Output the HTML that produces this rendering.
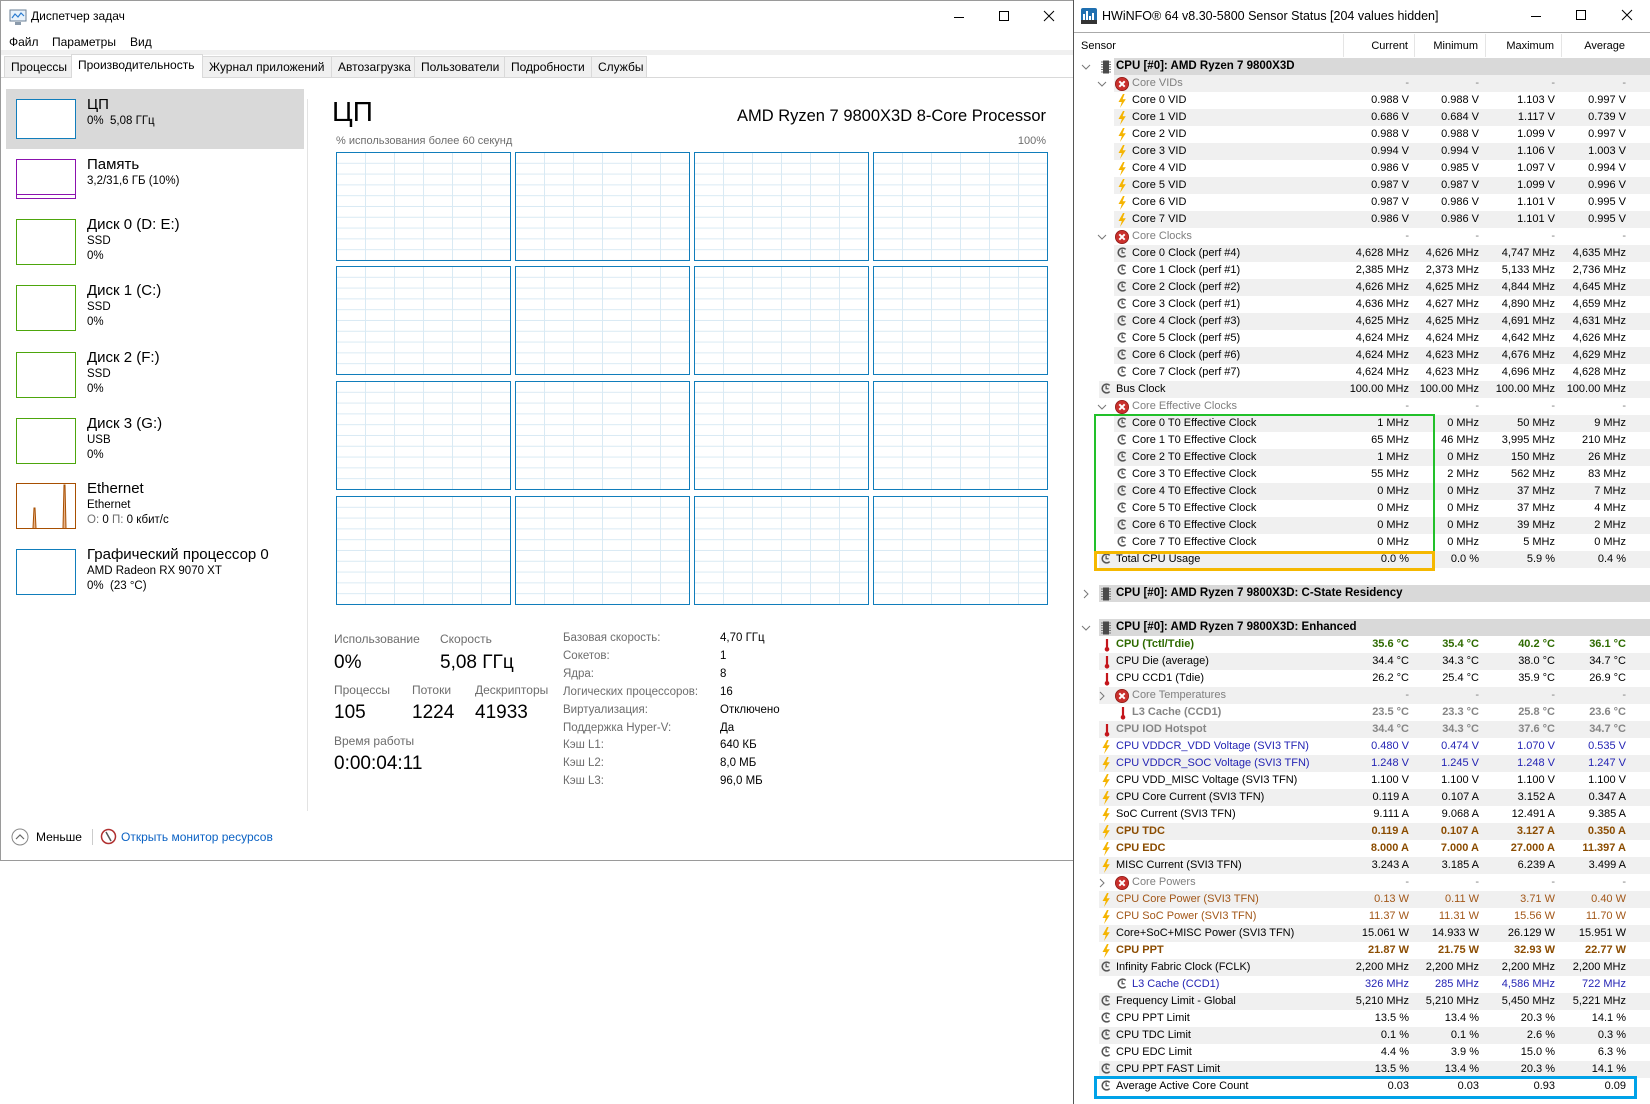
<!DOCTYPE html>
<html><head><meta charset="utf-8">
<style>
*{margin:0;padding:0;box-sizing:border-box}
body{width:1650px;height:1104px;background:#fff;position:relative;overflow:hidden;font-family:"Liberation Sans","DejaVu Sans",sans-serif;color:#000}
.a{position:absolute;white-space:nowrap}
#tm{position:absolute;left:0;top:0;width:1074px;height:861px;border:1px solid #9a9a9a;background:#fff}
.tab{position:absolute;top:55px;height:21px;border:1px solid #d9d9d9;border-bottom:none;background:#f0f0f0;font-size:12px;line-height:20px;padding-left:6px}
.tab.on{top:53px;height:24px;background:#fff;z-index:2}
.thumb{position:absolute;left:15px;width:60px;border:1px solid}
.it1{position:absolute;left:86px;font-size:15px;white-space:nowrap}
.it2{position:absolute;left:86px;font-size:11.5px;white-space:nowrap}
.gph{position:absolute;width:175px;height:109px;border:1px solid #117dbb;background-color:#fff;
background-image:linear-gradient(#d9eaf4 1px,transparent 1px),linear-gradient(90deg,#d9eaf4 1px,transparent 1px);
background-size:100% 10.8px,29px 100%;background-position:0 -1px,-1px 0}
.lb{position:absolute;font-size:12px;color:#6d6d6d;white-space:nowrap}
.vl{position:absolute;font-size:19px;white-space:nowrap}
.il{position:absolute;left:562px;font-size:11.5px;color:#6d6d6d;white-space:nowrap}
.iv{position:absolute;left:719px;font-size:11.5px;white-space:nowrap}
#hw{position:absolute;left:1073px;top:0;width:577px;height:1104px;border-left:1px solid #555;background:#fff}
.r{position:absolute;left:0;width:577px;height:17px;font-size:11px;line-height:17px}
.r.g::before,.r.g2::before,.r.h::before,.r.h2::before{content:"";position:absolute;top:0;bottom:0;right:0;left:25px;background:#f0f0f0}
.r.g2::before{left:40px}
.r.h::before{background:#d9d9d9}
.r.h2::before{background:#d9d9d9;left:40px}
.r>*{position:absolute;z-index:1}
.r b{font-weight:normal;text-align:right}
.r b:nth-of-type(1){right:242px}
.r b:nth-of-type(2){right:172px}
.r b:nth-of-type(3){right:96px}
.r b:nth-of-type(4){right:25px}
.t1{left:42px}.t2{left:58px}
.i1{left:27px;top:2px}.i2{left:43px;top:2px}
.x2{left:41px;top:2px}
.c0{left:7px;top:4px}.c1{left:23px;top:4px}
.hd{font-weight:bold;font-size:11.5px}
.gr{color:#7f7f7f}
.gn{color:#2e6a00;font-weight:bold}
.gn b{font-weight:bold}
.bl{color:#2424b4}
.br{color:#8b4c00;font-weight:bold}
.br b{font-weight:bold}
.bw{color:#a25718}
.gb{color:#858585;font-weight:bold}
.gb b{font-weight:bold}
.box{position:absolute;z-index:5}
</style></head><body>
<svg width="0" height="0" style="position:absolute">
<defs>
<symbol id="bo" viewBox="0 0 10 14"><path d="M6 0 L1.5 8 H4.8 L3 14 L8.8 5.2 H5.6 L7.6 0Z" fill="#f5b400"/></symbol>
<symbol id="ck" viewBox="0 0 12 12"><path d="M9.5 2.6 A4.8 4.8 0 1 0 9.5 9.4" fill="none" stroke="#555" stroke-width="1.7"/><path d="M5.6 2.6 V6.3 H8.4" fill="none" stroke="#555" stroke-width="1.4"/></symbol>
<symbol id="th" viewBox="0 0 12 14"><path d="M6 1 V10" stroke="#c4161c" stroke-width="2.2"/><circle cx="6" cy="11.3" r="2.3" fill="#c4161c"/></symbol>
<symbol id="xc" viewBox="0 0 14 14"><circle cx="7" cy="7" r="6.6" fill="#c9302c"/><circle cx="7" cy="7" r="6.6" fill="none" stroke="#8e1a16" stroke-width="0.8"/><path d="M4.3 4.3 L9.7 9.7 M9.7 4.3 L4.3 9.7" stroke="#fff" stroke-width="2"/></symbol>
<symbol id="cp" viewBox="0 0 10 14"><rect x="2" y="0.5" width="6" height="13" fill="#4a4a4a"/><path d="M0 2H2M0 4.5H2M0 7H2M0 9.5H2M0 12H2M8 2H10M8 4.5H10M8 7H10M8 9.5H10M8 12H10" stroke="#777" stroke-width="1"/></symbol>
<symbol id="dn" viewBox="0 0 10 10"><path d="M1 3 L5 7 L9 3" fill="none" stroke="#777" stroke-width="1"/></symbol>
<symbol id="rt" viewBox="0 0 10 10"><path d="M3 1 L7 5 L3 9" fill="none" stroke="#777" stroke-width="1"/></symbol>
</defs></svg>

<!-- TASK MANAGER -->
<div id="tm">
<svg class="a" style="left:8px;top:8px" width="18" height="17" viewBox="0 0 18 17"><rect x="1" y="1" width="16" height="11" fill="#e8f2fb" stroke="#6a7f94"/><path d="M3 9 L6 5 L9 8 L12 4 L15 7" fill="none" stroke="#2a7bd0" stroke-width="1.2"/><rect x="6" y="13" width="6" height="3" fill="#8a9aab"/></svg>
<div class="a" style="left:30px;top:8px;font-size:12px">Диспетчер задач</div>
<svg class="a" style="left:952px;top:10px" width="12" height="12"><path d="M1 6.5H11" stroke="#000"/></svg>
<svg class="a" style="left:997px;top:9px" width="12" height="12"><rect x="1.5" y="1.5" width="9" height="9" fill="none" stroke="#000"/></svg>
<svg class="a" style="left:1042px;top:9px" width="12" height="12"><path d="M1 1L11 11M11 1L1 11" stroke="#000"/></svg>
<div class="a" style="left:8px;top:34px;font-size:12px">Файл</div>
<div class="a" style="left:51px;top:34px;font-size:12px">Параметры</div>
<div class="a" style="left:129px;top:34px;font-size:12px">Вид</div>
<div class="a" style="left:0;top:49px;width:1073px;height:5px;background:#f0f0f0"></div>
<div class="a" style="left:0;top:76px;width:1073px;height:1px;background:#d9d9d9"></div>
<div class="tab" style="left:3px;width:68px">Процессы</div>
<div class="tab on" style="left:70px;width:132px">Производительность</div>
<div class="tab" style="left:201px;width:130px">Журнал приложений</div>
<div class="tab" style="left:330px;width:84px">Автозагрузка</div>
<div class="tab" style="left:413px;width:91px">Пользователи</div>
<div class="tab" style="left:503px;width:88px">Подробности</div>
<div class="tab" style="left:590px;width:56px">Службы</div>

<div class="a" style="left:5px;top:88px;width:298px;height:60px;background:#d9d9d9"></div>
<div class="thumb" style="top:98px;height:40px;border-color:#117dbb;background:#fff"></div>
<div class="it1" style="top:95px">ЦП</div><div class="it2" style="top:114px">0%&nbsp; 5,08 ГГц</div>
<div class="thumb" style="top:158px;height:40px;border-color:#8b12ae;background:#fff"><div style="position:absolute;left:0;right:0;bottom:3px;height:1px;background:#8b12ae"></div></div>
<div class="it1" style="top:155px">Память</div><div class="it2" style="top:174px">3,2/31,6 ГБ (10%)</div>
<div class="thumb" style="top:218px;height:46px;border-color:#4da60c"></div>
<div class="it1" style="top:215px">Диск 0 (D: E:)</div><div class="it2" style="top:234px">SSD</div><div class="it2" style="top:249px">0%</div>
<div class="thumb" style="top:284px;height:46px;border-color:#4da60c"></div>
<div class="it1" style="top:281px">Диск 1 (C:)</div><div class="it2" style="top:300px">SSD</div><div class="it2" style="top:315px">0%</div>
<div class="thumb" style="top:351px;height:46px;border-color:#4da60c"></div>
<div class="it1" style="top:348px">Диск 2 (F:)</div><div class="it2" style="top:367px">SSD</div><div class="it2" style="top:382px">0%</div>
<div class="thumb" style="top:417px;height:46px;border-color:#4da60c"></div>
<div class="it1" style="top:414px">Диск 3 (G:)</div><div class="it2" style="top:433px">USB</div><div class="it2" style="top:448px">0%</div>
<div class="thumb" style="top:482px;height:46px;border-color:#a74f01"><svg width="58" height="44" style="position:absolute;left:0;top:0"><path d="M16 44 L17 24 L18 24 L19 44 M46 44 L47 1 L48 1 L49 44" fill="#e9b48a" stroke="#a74f01" stroke-width="1"/></svg></div>
<div class="it1" style="top:479px">Ethernet</div><div class="it2" style="top:498px">Ethernet</div><div class="it2" style="top:513px"><span style="color:#6d6d6d">О:</span> 0 <span style="color:#6d6d6d">П:</span> 0 кбит/с</div>
<div class="thumb" style="top:548px;height:46px;border-color:#117dbb"></div>
<div class="it1" style="top:545px">Графический процессор 0</div><div class="it2" style="top:564px">AMD Radeon RX 9070 XT</div><div class="it2" style="top:579px">0%&nbsp; (23 °C)</div>
<div class="a" style="left:306px;top:98px;width:1px;height:712px;background:#e3e3e3"></div>

<div class="a" style="left:331px;top:95px;font-size:28px">ЦП</div>
<div class="a" style="right:27px;top:106px;font-size:16.5px">AMD Ryzen 7 9800X3D 8-Core Processor</div>
<div class="a" style="left:335px;top:134px;font-size:11px;color:#6d6d6d">% использования более 60 секунд</div>
<div class="a" style="right:27px;top:134px;font-size:11px;color:#6d6d6d">100%</div>
<div class="gph" style="left:335px;top:151px"></div><div class="gph" style="left:514px;top:151px"></div><div class="gph" style="left:693px;top:151px"></div><div class="gph" style="left:872px;top:151px"></div>
<div class="gph" style="left:335px;top:265px"></div><div class="gph" style="left:514px;top:265px"></div><div class="gph" style="left:693px;top:265px"></div><div class="gph" style="left:872px;top:265px"></div>
<div class="gph" style="left:335px;top:380px"></div><div class="gph" style="left:514px;top:380px"></div><div class="gph" style="left:693px;top:380px"></div><div class="gph" style="left:872px;top:380px"></div>
<div class="gph" style="left:335px;top:495px"></div><div class="gph" style="left:514px;top:495px"></div><div class="gph" style="left:693px;top:495px"></div><div class="gph" style="left:872px;top:495px"></div>

<div class="lb" style="left:333px;top:631px">Использование</div>
<div class="lb" style="left:439px;top:631px">Скорость</div>
<div class="vl" style="left:333px;top:651px">0%</div>
<div class="vl" style="left:439px;top:651px">5,08 ГГц</div>
<div class="lb" style="left:333px;top:682px">Процессы</div>
<div class="lb" style="left:411px;top:682px">Потоки</div>
<div class="lb" style="left:474px;top:682px">Дескрипторы</div>
<div class="vl" style="left:333px;top:701px">105</div>
<div class="vl" style="left:411px;top:701px">1224</div>
<div class="vl" style="left:474px;top:701px">41933</div>
<div class="lb" style="left:333px;top:733px">Время работы</div>
<div class="vl" style="left:333px;top:752px">0:00:04:11</div>

<div class="il" style="top:631px">Базовая скорость:</div><div class="iv" style="top:631px">4,70 ГГц</div>
<div class="il" style="top:649px">Сокетов:</div><div class="iv" style="top:649px">1</div>
<div class="il" style="top:667px">Ядра:</div><div class="iv" style="top:667px">8</div>
<div class="il" style="top:685px">Логических процессоров:</div><div class="iv" style="top:685px">16</div>
<div class="il" style="top:703px">Виртуализация:</div><div class="iv" style="top:703px">Отключено</div>
<div class="il" style="top:721px">Поддержка Hyper-V:</div><div class="iv" style="top:721px">Да</div>
<div class="il" style="top:738px">Кэш L1:</div><div class="iv" style="top:738px">640 КБ</div>
<div class="il" style="top:756px">Кэш L2:</div><div class="iv" style="top:756px">8,0 МБ</div>
<div class="il" style="top:774px">Кэш L3:</div><div class="iv" style="top:774px">96,0 МБ</div>

<svg class="a" style="left:10px;top:827px" width="18" height="18"><circle cx="9" cy="9" r="8" fill="none" stroke="#888"/><path d="M5 11 L9 7 L13 11" fill="none" stroke="#666" stroke-width="1.2"/></svg>
<div class="a" style="left:35px;top:829px;font-size:12px">Меньше</div>
<div class="a" style="left:91px;top:828px;width:1px;height:16px;background:#ccc"></div>
<svg class="a" style="left:99px;top:827px" width="17" height="17"><circle cx="8.5" cy="8.5" r="7" fill="none" stroke="#b03030" stroke-width="1.5"/><path d="M6 4 L11 13" stroke="#555" stroke-width="1.5"/></svg>
<div class="a" style="left:120px;top:829px;font-size:12px;color:#0b62c4">Открыть монитор ресурсов</div>
</div>

<!-- HWINFO -->
<div id="hw">
<svg class="a" style="left:7px;top:8px" width="16" height="16"><rect width="16" height="16" rx="2" fill="#1f6fb0"/><path d="M3 13V6M6 13V3M9 13V8M12 13V5" stroke="#fff" stroke-width="2"/><rect x="0" y="12" width="16" height="4" fill="#333"/></svg>
<div class="a" style="left:28px;top:9px;font-size:12.5px">HWiNFO® 64 v8.30-5800 Sensor Status [204 values hidden]</div>
<svg class="a" style="left:456px;top:10px" width="12" height="12"><path d="M1 6.5H11" stroke="#000"/></svg>
<svg class="a" style="left:501px;top:9px" width="12" height="12"><rect x="1.5" y="1.5" width="9" height="9" fill="none" stroke="#000"/></svg>
<svg class="a" style="left:547px;top:9px" width="12" height="12"><path d="M1 1L11 11M11 1L1 11" stroke="#000"/></svg>
<div class="a" style="left:0;top:32px;width:577px;height:1px;background:#aaa"></div>
<div class="a" style="left:7px;top:40px;font-size:11px">Sensor</div>
<div class="a" style="left:269px;top:34px;width:1px;height:23px;background:#e5e5e5"></div>
<div class="a" style="left:340px;top:34px;width:1px;height:23px;background:#e5e5e5"></div>
<div class="a" style="left:411px;top:34px;width:1px;height:23px;background:#e5e5e5"></div>
<div class="a" style="left:487px;top:34px;width:1px;height:23px;background:#e5e5e5"></div>
<div class="a" style="right:242px;top:40px;font-size:11px">Current</div>
<div class="a" style="right:172px;top:40px;font-size:11px">Minimum</div>
<div class="a" style="right:96px;top:40px;font-size:11px">Maximum</div>
<div class="a" style="right:25px;top:40px;font-size:11px">Average</div>

<div class="r h2" style="top:58px"><svg class="c0" width="10" height="10"><use href="#dn"/></svg><svg class="i1" width="10" height="14"><use href="#cp"/></svg><span class="t1 hd">CPU [#0]: AMD Ryzen 7 9800X3D</span></div>
<div class="r g2 gr" style="top:75px"><svg class="c1" width="10" height="10"><use href="#dn"/></svg><svg class="x2" width="14" height="14"><use href="#xc"/></svg><span class="t2">Core VIDs</span><b>-</b><b>-</b><b>-</b><b>-</b></div>
<div class="r" style="top:92px"><svg class="i2" width="10" height="14"><use href="#bo"/></svg><span class="t2">Core 0 VID</span><b>0.988 V</b><b>0.988 V</b><b>1.103 V</b><b>0.997 V</b></div>
<div class="r g2" style="top:109px"><svg class="i2" width="10" height="14"><use href="#bo"/></svg><span class="t2">Core 1 VID</span><b>0.686 V</b><b>0.684 V</b><b>1.117 V</b><b>0.739 V</b></div>
<div class="r" style="top:126px"><svg class="i2" width="10" height="14"><use href="#bo"/></svg><span class="t2">Core 2 VID</span><b>0.988 V</b><b>0.988 V</b><b>1.099 V</b><b>0.997 V</b></div>
<div class="r g2" style="top:143px"><svg class="i2" width="10" height="14"><use href="#bo"/></svg><span class="t2">Core 3 VID</span><b>0.994 V</b><b>0.994 V</b><b>1.106 V</b><b>1.003 V</b></div>
<div class="r" style="top:160px"><svg class="i2" width="10" height="14"><use href="#bo"/></svg><span class="t2">Core 4 VID</span><b>0.986 V</b><b>0.985 V</b><b>1.097 V</b><b>0.994 V</b></div>
<div class="r g2" style="top:177px"><svg class="i2" width="10" height="14"><use href="#bo"/></svg><span class="t2">Core 5 VID</span><b>0.987 V</b><b>0.987 V</b><b>1.099 V</b><b>0.996 V</b></div>
<div class="r" style="top:194px"><svg class="i2" width="10" height="14"><use href="#bo"/></svg><span class="t2">Core 6 VID</span><b>0.987 V</b><b>0.986 V</b><b>1.101 V</b><b>0.995 V</b></div>
<div class="r g2" style="top:211px"><svg class="i2" width="10" height="14"><use href="#bo"/></svg><span class="t2">Core 7 VID</span><b>0.986 V</b><b>0.986 V</b><b>1.101 V</b><b>0.995 V</b></div>
<div class="r gr" style="top:228px"><svg class="c1" width="10" height="10"><use href="#dn"/></svg><svg class="x2" width="14" height="14"><use href="#xc"/></svg><span class="t2">Core Clocks</span><b>-</b><b>-</b><b>-</b><b>-</b></div>
<div class="r g2" style="top:245px"><svg class="i2" width="11" height="11"><use href="#ck"/></svg><span class="t2">Core 0 Clock (perf #4)</span><b>4,628 MHz</b><b>4,626 MHz</b><b>4,747 MHz</b><b>4,635 MHz</b></div>
<div class="r" style="top:262px"><svg class="i2" width="11" height="11"><use href="#ck"/></svg><span class="t2">Core 1 Clock (perf #1)</span><b>2,385 MHz</b><b>2,373 MHz</b><b>5,133 MHz</b><b>2,736 MHz</b></div>
<div class="r g2" style="top:279px"><svg class="i2" width="11" height="11"><use href="#ck"/></svg><span class="t2">Core 2 Clock (perf #2)</span><b>4,626 MHz</b><b>4,625 MHz</b><b>4,844 MHz</b><b>4,645 MHz</b></div>
<div class="r" style="top:296px"><svg class="i2" width="11" height="11"><use href="#ck"/></svg><span class="t2">Core 3 Clock (perf #1)</span><b>4,636 MHz</b><b>4,627 MHz</b><b>4,890 MHz</b><b>4,659 MHz</b></div>
<div class="r g2" style="top:313px"><svg class="i2" width="11" height="11"><use href="#ck"/></svg><span class="t2">Core 4 Clock (perf #3)</span><b>4,625 MHz</b><b>4,625 MHz</b><b>4,691 MHz</b><b>4,631 MHz</b></div>
<div class="r" style="top:330px"><svg class="i2" width="11" height="11"><use href="#ck"/></svg><span class="t2">Core 5 Clock (perf #5)</span><b>4,624 MHz</b><b>4,624 MHz</b><b>4,642 MHz</b><b>4,626 MHz</b></div>
<div class="r g2" style="top:347px"><svg class="i2" width="11" height="11"><use href="#ck"/></svg><span class="t2">Core 6 Clock (perf #6)</span><b>4,624 MHz</b><b>4,623 MHz</b><b>4,676 MHz</b><b>4,629 MHz</b></div>
<div class="r" style="top:364px"><svg class="i2" width="11" height="11"><use href="#ck"/></svg><span class="t2">Core 7 Clock (perf #7)</span><b>4,624 MHz</b><b>4,623 MHz</b><b>4,696 MHz</b><b>4,628 MHz</b></div>
<div class="r g" style="top:381px"><svg class="i1" width="11" height="11"><use href="#ck"/></svg><span class="t1">Bus Clock</span><b>100.00 MHz</b><b>100.00 MHz</b><b>100.00 MHz</b><b>100.00 MHz</b></div>
<div class="r gr" style="top:398px"><svg class="c1" width="10" height="10"><use href="#dn"/></svg><svg class="x2" width="14" height="14"><use href="#xc"/></svg><span class="t2">Core Effective Clocks</span><b>-</b><b>-</b><b>-</b><b>-</b></div>
<div class="r g2" style="top:415px"><svg class="i2" width="11" height="11"><use href="#ck"/></svg><span class="t2">Core 0 T0 Effective Clock</span><b>1 MHz</b><b>0 MHz</b><b>50 MHz</b><b>9 MHz</b></div>
<div class="r" style="top:432px"><svg class="i2" width="11" height="11"><use href="#ck"/></svg><span class="t2">Core 1 T0 Effective Clock</span><b>65 MHz</b><b>46 MHz</b><b>3,995 MHz</b><b>210 MHz</b></div>
<div class="r g2" style="top:449px"><svg class="i2" width="11" height="11"><use href="#ck"/></svg><span class="t2">Core 2 T0 Effective Clock</span><b>1 MHz</b><b>0 MHz</b><b>150 MHz</b><b>26 MHz</b></div>
<div class="r" style="top:466px"><svg class="i2" width="11" height="11"><use href="#ck"/></svg><span class="t2">Core 3 T0 Effective Clock</span><b>55 MHz</b><b>2 MHz</b><b>562 MHz</b><b>83 MHz</b></div>
<div class="r g2" style="top:483px"><svg class="i2" width="11" height="11"><use href="#ck"/></svg><span class="t2">Core 4 T0 Effective Clock</span><b>0 MHz</b><b>0 MHz</b><b>37 MHz</b><b>7 MHz</b></div>
<div class="r" style="top:500px"><svg class="i2" width="11" height="11"><use href="#ck"/></svg><span class="t2">Core 5 T0 Effective Clock</span><b>0 MHz</b><b>0 MHz</b><b>37 MHz</b><b>4 MHz</b></div>
<div class="r g2" style="top:517px"><svg class="i2" width="11" height="11"><use href="#ck"/></svg><span class="t2">Core 6 T0 Effective Clock</span><b>0 MHz</b><b>0 MHz</b><b>39 MHz</b><b>2 MHz</b></div>
<div class="r" style="top:534px"><svg class="i2" width="11" height="11"><use href="#ck"/></svg><span class="t2">Core 7 T0 Effective Clock</span><b>0 MHz</b><b>0 MHz</b><b>5 MHz</b><b>0 MHz</b></div>
<div class="r g" style="top:551px"><svg class="i1" width="11" height="11"><use href="#ck"/></svg><span class="t1">Total CPU Usage</span><b>0.0 %</b><b>0.0 %</b><b>5.9 %</b><b>0.4 %</b></div>
<div class="r h" style="top:585px"><svg class="c0" width="10" height="10"><use href="#rt"/></svg><svg class="i1" width="10" height="14"><use href="#cp"/></svg><span class="t1 hd">CPU [#0]: AMD Ryzen 7 9800X3D: C-State Residency</span></div>
<div class="r h" style="top:619px"><svg class="c0" width="10" height="10"><use href="#dn"/></svg><svg class="i1" width="10" height="14"><use href="#cp"/></svg><span class="t1 hd">CPU [#0]: AMD Ryzen 7 9800X3D: Enhanced</span></div>
<div class="r gn" style="top:636px"><svg class="i1" width="12" height="14"><use href="#th"/></svg><span class="t1">CPU (Tctl/Tdie)</span><b>35.6 °C</b><b>35.4 °C</b><b>40.2 °C</b><b>36.1 °C</b></div>
<div class="r g" style="top:653px"><svg class="i1" width="12" height="14"><use href="#th"/></svg><span class="t1">CPU Die (average)</span><b>34.4 °C</b><b>34.3 °C</b><b>38.0 °C</b><b>34.7 °C</b></div>
<div class="r" style="top:670px"><svg class="i1" width="12" height="14"><use href="#th"/></svg><span class="t1">CPU CCD1 (Tdie)</span><b>26.2 °C</b><b>25.4 °C</b><b>35.9 °C</b><b>26.9 °C</b></div>
<div class="r g gr" style="top:687px"><svg class="c1" width="10" height="10"><use href="#rt"/></svg><svg class="x2" width="14" height="14"><use href="#xc"/></svg><span class="t2">Core Temperatures</span><b>-</b><b>-</b><b>-</b><b>-</b></div>
<div class="r gb" style="top:704px"><svg class="i2" width="12" height="14"><use href="#th"/></svg><span class="t2">L3 Cache (CCD1)</span><b>23.5 °C</b><b>23.3 °C</b><b>25.8 °C</b><b>23.6 °C</b></div>
<div class="r g gb" style="top:721px"><svg class="i1" width="12" height="14"><use href="#th"/></svg><span class="t1">CPU IOD Hotspot</span><b>34.4 °C</b><b>34.3 °C</b><b>37.6 °C</b><b>34.7 °C</b></div>
<div class="r bl" style="top:738px"><svg class="i1" width="10" height="14"><use href="#bo"/></svg><span class="t1">CPU VDDCR_VDD Voltage (SVI3 TFN)</span><b>0.480 V</b><b>0.474 V</b><b>1.070 V</b><b>0.535 V</b></div>
<div class="r g bl" style="top:755px"><svg class="i1" width="10" height="14"><use href="#bo"/></svg><span class="t1">CPU VDDCR_SOC Voltage (SVI3 TFN)</span><b>1.248 V</b><b>1.245 V</b><b>1.248 V</b><b>1.247 V</b></div>
<div class="r" style="top:772px"><svg class="i1" width="10" height="14"><use href="#bo"/></svg><span class="t1">CPU VDD_MISC Voltage (SVI3 TFN)</span><b>1.100 V</b><b>1.100 V</b><b>1.100 V</b><b>1.100 V</b></div>
<div class="r g" style="top:789px"><svg class="i1" width="10" height="14"><use href="#bo"/></svg><span class="t1">CPU Core Current (SVI3 TFN)</span><b>0.119 A</b><b>0.107 A</b><b>3.152 A</b><b>0.347 A</b></div>
<div class="r" style="top:806px"><svg class="i1" width="10" height="14"><use href="#bo"/></svg><span class="t1">SoC Current (SVI3 TFN)</span><b>9.111 A</b><b>9.068 A</b><b>12.491 A</b><b>9.385 A</b></div>
<div class="r g br" style="top:823px"><svg class="i1" width="10" height="14"><use href="#bo"/></svg><span class="t1">CPU TDC</span><b>0.119 A</b><b>0.107 A</b><b>3.127 A</b><b>0.350 A</b></div>
<div class="r br" style="top:840px"><svg class="i1" width="10" height="14"><use href="#bo"/></svg><span class="t1">CPU EDC</span><b>8.000 A</b><b>7.000 A</b><b>27.000 A</b><b>11.397 A</b></div>
<div class="r g" style="top:857px"><svg class="i1" width="10" height="14"><use href="#bo"/></svg><span class="t1">MISC Current (SVI3 TFN)</span><b>3.243 A</b><b>3.185 A</b><b>6.239 A</b><b>3.499 A</b></div>
<div class="r gr" style="top:874px"><svg class="c1" width="10" height="10"><use href="#rt"/></svg><svg class="x2" width="14" height="14"><use href="#xc"/></svg><span class="t2">Core Powers</span><b>-</b><b>-</b><b>-</b><b>-</b></div>
<div class="r g bw" style="top:891px"><svg class="i1" width="10" height="14"><use href="#bo"/></svg><span class="t1">CPU Core Power (SVI3 TFN)</span><b>0.13 W</b><b>0.11 W</b><b>3.71 W</b><b>0.40 W</b></div>
<div class="r bw" style="top:908px"><svg class="i1" width="10" height="14"><use href="#bo"/></svg><span class="t1">CPU SoC Power (SVI3 TFN)</span><b>11.37 W</b><b>11.31 W</b><b>15.56 W</b><b>11.70 W</b></div>
<div class="r g" style="top:925px"><svg class="i1" width="10" height="14"><use href="#bo"/></svg><span class="t1">Core+SoC+MISC Power (SVI3 TFN)</span><b>15.061 W</b><b>14.933 W</b><b>26.129 W</b><b>15.951 W</b></div>
<div class="r br" style="top:942px"><svg class="i1" width="10" height="14"><use href="#bo"/></svg><span class="t1">CPU PPT</span><b>21.87 W</b><b>21.75 W</b><b>32.93 W</b><b>22.77 W</b></div>
<div class="r g" style="top:959px"><svg class="i1" width="11" height="11"><use href="#ck"/></svg><span class="t1">Infinity Fabric Clock (FCLK)</span><b>2,200 MHz</b><b>2,200 MHz</b><b>2,200 MHz</b><b>2,200 MHz</b></div>
<div class="r bl" style="top:976px"><svg class="i2" width="11" height="11"><use href="#ck"/></svg><span class="t2">L3 Cache (CCD1)</span><b>326 MHz</b><b>285 MHz</b><b>4,586 MHz</b><b>722 MHz</b></div>
<div class="r g" style="top:993px"><svg class="i1" width="11" height="11"><use href="#ck"/></svg><span class="t1">Frequency Limit - Global</span><b>5,210 MHz</b><b>5,210 MHz</b><b>5,450 MHz</b><b>5,221 MHz</b></div>
<div class="r" style="top:1010px"><svg class="i1" width="11" height="11"><use href="#ck"/></svg><span class="t1">CPU PPT Limit</span><b>13.5 %</b><b>13.4 %</b><b>20.3 %</b><b>14.1 %</b></div>
<div class="r g" style="top:1027px"><svg class="i1" width="11" height="11"><use href="#ck"/></svg><span class="t1">CPU TDC Limit</span><b>0.1 %</b><b>0.1 %</b><b>2.6 %</b><b>0.3 %</b></div>
<div class="r" style="top:1044px"><svg class="i1" width="11" height="11"><use href="#ck"/></svg><span class="t1">CPU EDC Limit</span><b>4.4 %</b><b>3.9 %</b><b>15.0 %</b><b>6.3 %</b></div>
<div class="r g" style="top:1061px"><svg class="i1" width="11" height="11"><use href="#ck"/></svg><span class="t1">CPU PPT FAST Limit</span><b>13.5 %</b><b>13.4 %</b><b>20.3 %</b><b>14.1 %</b></div>
<div class="r" style="top:1078px"><svg class="i1" width="11" height="11"><use href="#ck"/></svg><span class="t1">Average Active Core Count</span><b>0.03</b><b>0.03</b><b>0.93</b><b>0.09</b></div>
</div>

<div class="box" style="left:1094px;top:414px;width:341px;height:139px;border:2px solid #22c02a"></div>
<div class="box" style="left:1094px;top:551px;width:341px;height:20px;border:3px solid #f5b800"></div>
<div class="box" style="left:1094px;top:1076px;width:543px;height:23px;border:3px solid #00a2e8"></div>
</body></html>
